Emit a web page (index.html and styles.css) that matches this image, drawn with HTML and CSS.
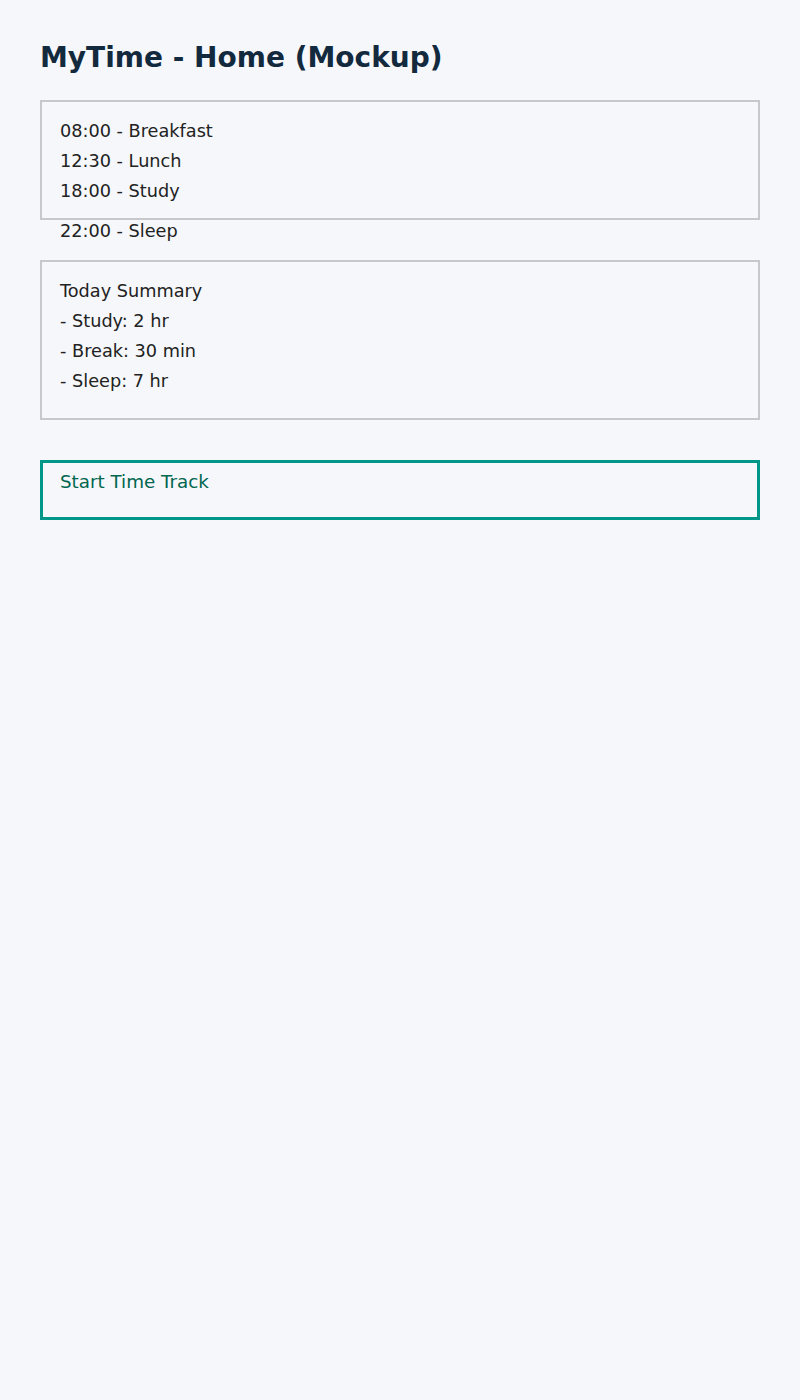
FILE: index.html
```html
<!DOCTYPE html>
<html lang="en">
<head>
<meta charset="utf-8">
<title>MyTime - Home (Mockup)</title>
<link rel="stylesheet" href="styles.css">
</head>
<body>
  <main class="page">
    <h1 class="title">MyTime - Home (Mockup)</h1>
    <section class="card schedule">
      <div class="line">08:00 - Breakfast</div>
      <div class="line">12:30 - Lunch</div>
      <div class="line">18:00 - Study</div>
      <div class="line late">22:00 - Sleep</div>
    </section>
    <section class="card summary">
      <div class="line">Today Summary</div>
      <div class="line">- Study: 2 hr</div>
      <div class="line">- Break: 30 min</div>
      <div class="line">- Sleep: 7 hr</div>
    </section>
    <div class="track">Start Time Track</div>
  </main>
</body>
</html>
```
FILE: styles.css
```css
html, body {
  margin: 0;
  padding: 0;
  background: #f5f7fa;
}
body {
  font-family: "DejaVu Sans", sans-serif;
  color: #222222;
}
.page {
  padding: 40px;
  display: flex;
  flex-direction: column;
}
.title {
  margin: 0 0 26px 0;
  padding-top: 1px;
  font-size: 28px;
  font-weight: bold;
  line-height: normal;
  color: #13293d;
}
.card {
  box-sizing: border-box;
  border: 2px solid #c6c8cb;
  padding: 14px 18px;
  font-size: 17.7px;
}
.line {
  line-height: 30px;
}
.schedule {
  height: 120px;
}
.late {
  margin-top: 10px;
}
.summary {
  height: 160px;
  margin-top: 40px;
}
.track {
  box-sizing: border-box;
  margin-top: 40px;
  height: 60px;
  border: 3px solid #009688;
  padding: 8px 17px;
  font-size: 18.3px;
  line-height: normal;
  color: #00664f;
}
```
